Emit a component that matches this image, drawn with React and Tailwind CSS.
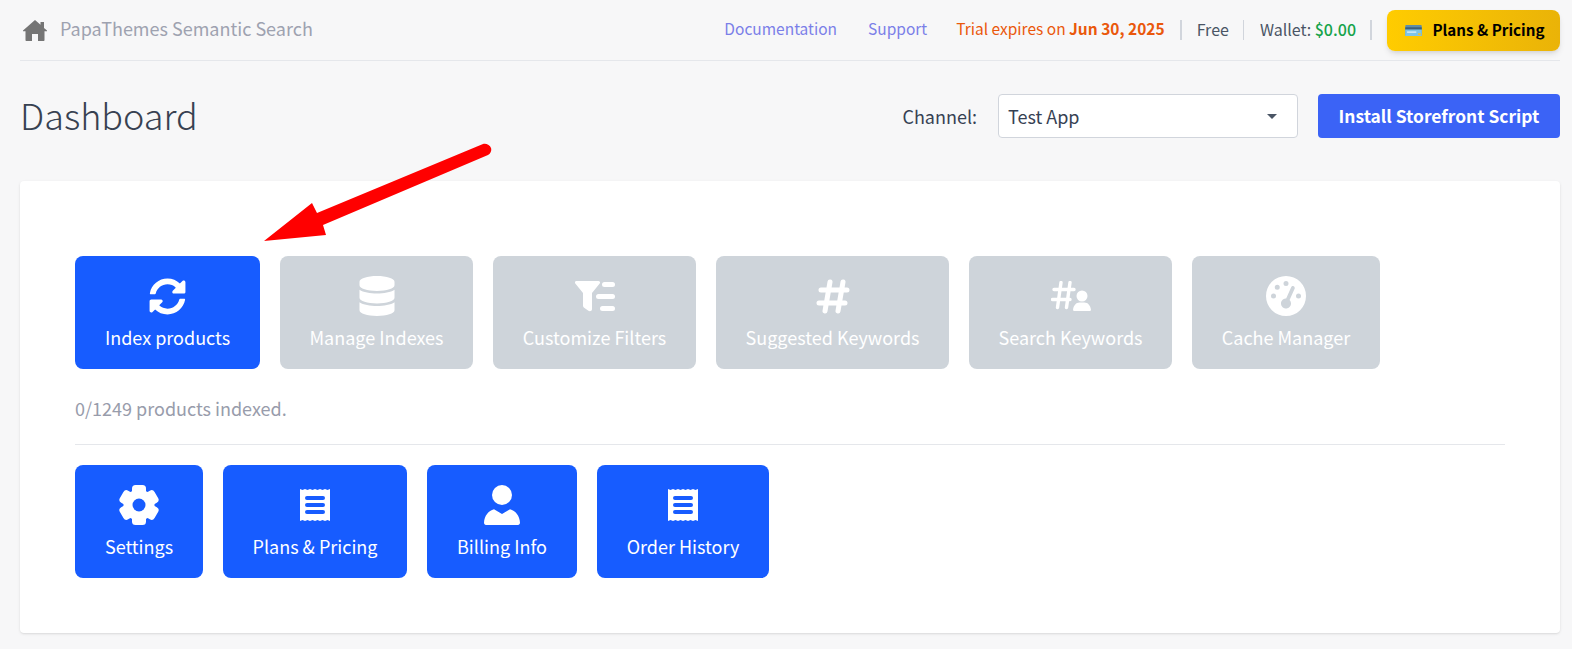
import React from 'react'
import { FaDatabase, FaSyncAlt } from 'react-icons/fa'
import { FaGaugeHigh } from 'react-icons/fa6'

const HomeIcon = ({ className }) => (
  <svg viewBox="0 0 24 21" className={className} fill="currentColor">
    <path d="M12 0l5.500 4.800V2H21v5.900l3 2.600c.3.300.1.800-.3.800H21.500V20c0 .6-.4 1-1 1H15v-7H9v7H3.500c-.6 0-1-.4-1-1v-8.700H.3c-.4 0-.6-.5-.3-.8L12 0z" />
  </svg>
)

const FilterIcon = ({ className }) => (
  <svg viewBox="0 0 40 31" className={className} fill="currentColor">
    <path d="M1.500 0h22c1.400 0 2 1.600 1.200 2.600L17 12v16c0 1.800-2 3-3.600 1.800L9.500 27c-.9-.6-1.500-1.500-1.500-2.600V12L.3 2.600C-.5 1.600.1 0 1.500 0z" />
    <rect x="27" y="1" width="13" height="5" rx="2.500" />
    <rect x="21" y="13" width="19" height="5" rx="2.500" />
    <rect x="25" y="25" width="15" height="5" rx="2.500" />
  </svg>
)

const HashIcon = ({ className }) => (
  <svg viewBox="0 0 34 35" className={className} stroke="currentColor" strokeWidth="5" strokeLinecap="round" fill="none">
    <path d="M14 3L9 32M27 3L22 32M5 11H31M3 24H29" />
  </svg>
)

const HashUserIcon = ({ className }) => (
  <svg viewBox="0 0 40 30" className={className}>
    <path d="M10 1.500L6.500 26.500M19 1.500L15.500 26.500M3 8.500H23M1.500 18.500H19" stroke="currentColor" strokeWidth="3.400" strokeLinecap="round" fill="none" />
    <g fill="currentColor">
      <circle cx="31" cy="15" r="5.500" />
      <path d="M23.500 30c-1 0-1.600-.8-1.400-1.700.7-4 3-6.800 6.400-6.800h5c3.400 0 5.700 2.800 6.400 6.800.2.900-.4 1.700-1.400 1.700H23.500z" />
    </g>
  </svg>
)

const GearIcon = ({ className }) => (
  <svg viewBox="-20 -20 40 40" className={className}>
    <g fill="currentColor">
      <circle r="15.500" />
      {[0, 60, 120, 180, 240, 300].map((deg) => (
        <rect key={deg} x="-7" y="-20" width="14" height="12" rx="3.500" transform={`rotate(${deg})`} />
      ))}
    </g>
    <circle r="6.500" fill="#175cff" />
  </svg>
)

const ReceiptIcon = ({ className }) => (
  <svg viewBox="0 0 30 32" className={className} fill="currentColor" fillRule="evenodd">
    <path d="M0 0l2.500 1L5 0l2.500 1L10 0l2.500 1L15 0l2.500 1L20 0l2.500 1L25 0l2.500 1L30 0v32l-2.500-1-2.500 1-2.500-1-2.500 1-2.500-1-2.500 1-2.500-1-2.500 1-2.500-1L5 32l-2.500-1L0 32V0zM7 7a2 2 0 0 0 0 4h16a2 2 0 0 0 0-4H7zm0 7a2 2 0 0 0 0 4h16a2 2 0 0 0 0-4H7zm0 7a2 2 0 0 0 0 4h16a2 2 0 0 0 0-4H7z" />
  </svg>
)

const UserIcon = ({ className }) => (
  <svg viewBox="0 0 36 40" className={className} fill="currentColor">
    <circle cx="18" cy="10" r="10" />
    <path d="M2 40c-1.200 0-2-1-2-2.200C.3 31 4.500 25.500 10 24.300L18 29l8-4.700C31.500 25.500 35.700 31 36 37.800c0 1.200-.8 2.200-2 2.200H2z" />
  </svg>
)

const CardEmoji = () => (
  <svg viewBox="0 0 18 12" className="w-[17px] h-[11px] ml-[3px]">
    <rect width="18" height="12" rx="1" fill="#5f8ea8" />
    <rect y="2.500" width="18" height="2.500" fill="#3d5f78" />
    <rect y="5" width="18" height="7" fill="#7dc4e8" />
    <rect x="2" y="7" width="10" height="1.500" fill="#d8eef8" />
    <rect x="14" y="9" width="3" height="2" fill="#e8c040" />
  </svg>
)

const Sep = ({ thin }) => (
  <div className={`h-5 bg-gray-300 ${thin ? 'w-px' : 'w-[2px]'}`} />
)

const Tile = ({ icon, label, disabled, width }) => (
  <div
    className={`flex flex-col items-center rounded-lg h-[113px] pt-[19px] text-white text-[18px] leading-6 ${width} ${disabled ? 'bg-[#ced4da]' : 'bg-[#175cff]'}`}
  >
    <div className="h-[42px] flex items-center justify-center">{icon}</div>
    <div className="mt-[8px] whitespace-nowrap">{label}</div>
  </div>
)

export default function App() {
  return (
    <div className="relative min-h-[649px] bg-[#f7f7f8] pl-5 pr-3 font-['Noto_Sans_CJK_SC','Noto_Sans',sans-serif] text-gray-700 overflow-hidden">
      {/* Top bar */}
      <div className="h-[61px] border-b border-gray-200 flex items-center justify-between text-[16px]">
        <div className="flex items-center">
          <HomeIcon className="ml-[3px] w-6 h-[21px] text-[#757575]" />
          <span className="ml-[13px] mb-[3px] text-[18px] text-[#9ea2b0]">PapaThemes Semantic Search</span>
        </div>
        <div className="flex items-center">
          <a className="text-[#7b7fe8] text-[15.500px] mb-[3px] mr-[31px]">Documentation</a>
          <a className="text-[#7b7fe8] text-[15.500px] mb-[3px] mr-[29px]">Support</a>
          <span className="text-[#ea580c] text-[15.500px] mb-[3px]">
            Trial expires on <b className="font-bold">Jun 30, 2025</b>
          </span>
          <div className="mx-[15px]"><Sep /></div>
          <span className="text-gray-600 mb-[3px]">Free</span>
          <div className="ml-[14px] mr-4"><Sep thin /></div>
          <span className="text-gray-600 mb-[3px]">
            Wallet: <span className="text-[#16a34a] font-medium">$0.00</span>
          </span>
          <div className="ml-[14px] mr-[15px]"><Sep /></div>
          <div className="w-[173px] h-[41px] rounded-lg bg-gradient-to-r from-[#ffcc00] to-[#eab308] shadow-md flex items-center justify-center gap-[10px] font-semibold text-black text-[15.200px]">
            <CardEmoji />
            <span className="mb-[2px]">Plans &amp; Pricing</span>
          </div>
        </div>
      </div>

      {/* Title row */}
      <div className="mt-[33px] h-11 flex items-center justify-between">
        <h1 className="mb-[4px] text-[36px] font-extralight text-[#374151] leading-none">Dashboard</h1>
        <div className="flex items-center">
          <span className="text-[18px] mr-[21px]">Channel:</span>
          <div className="w-[300px] h-11 bg-white border border-gray-300 rounded flex items-center justify-between pl-[9px] pr-5 text-[18px]">
            Test App
            <span className="w-0 h-0 border-l-[5px] border-r-[5px] border-t-[5px] border-l-transparent border-r-transparent border-t-gray-600" />
          </div>
          <div className="ml-5 w-[242px] h-11 rounded bg-[#3b63f6] text-white text-[17.400px] font-semibold flex items-center justify-center">
            Install Storefront Script
          </div>
        </div>
      </div>

      {/* Card */}
      <div className="mt-[43px] h-[452px] bg-white rounded shadow-sm pt-[75px] px-[55px]">
        <div className="flex gap-5">
          <Tile width="w-[185px]" label="Index products" icon={<FaSyncAlt className="w-[37px] h-[37px]" />} />
          <Tile disabled width="w-[193px]" label="Manage Indexes" icon={<FaDatabase className="w-9 h-[40px]" />} />
          <Tile disabled width="w-[203px]" label="Customize Filters" icon={<FilterIcon className="w-10 h-[31px]" />} />
          <Tile disabled width="w-[233px]" label="Suggested Keywords" icon={<HashIcon className="w-[34px] h-[35px]" />} />
          <Tile disabled width="w-[203px]" label="Search Keywords" icon={<HashUserIcon className="w-10 h-[30px]" />} />
          <Tile disabled width="w-[188px]" label="Cache Manager" icon={<FaGaugeHigh className="w-10 h-10" />} />
        </div>
        <p className="mt-[27px] text-[18px] leading-6 text-[#989cab]">0/1249 products indexed.</p>
        <hr className="mt-6 border-gray-200" />
        <div className="mt-5 flex gap-5">
          <Tile width="w-[128px]" label="Settings" icon={<GearIcon className="w-10 h-10" />} />
          <Tile width="w-[184px]" label="Plans & Pricing" icon={<ReceiptIcon className="w-[30px] h-8" />} />
          <Tile width="w-[150px]" label="Billing Info" icon={<UserIcon className="w-9 h-10" />} />
          <Tile width="w-[172px]" label="Order History" icon={<ReceiptIcon className="w-[30px] h-8" />} />
        </div>
      </div>

      {/* Annotation arrow */}
      <svg className="absolute left-0 top-0 w-[1572px] h-[649px] pointer-events-none" viewBox="0 0 1572 649">
        <path
          d="M264 241L312 203L317 213L483 144C486 143 490 145 491 148C492 151 490 154 488 155L323 225L326 235Z"
          fill="#ff0000"
        />
      </svg>
    </div>
  )
}
